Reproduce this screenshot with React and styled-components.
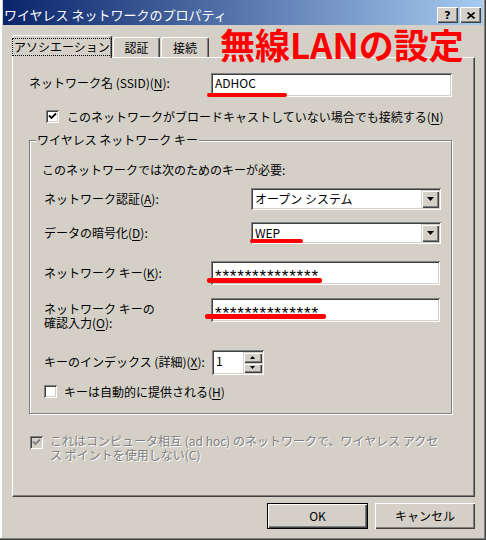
import React from 'react';
import styled, { createGlobalStyle } from 'styled-components';

const GlobalStyle = createGlobalStyle`
  html, body {
    margin: 0;
    padding: 0;
    background: #d4d0c8;
  }
  body {
    font-family: "Noto Sans CJK JP", "Noto Sans", sans-serif;
    font-size: 12px;
    color: #000;
  }
  * {
    box-sizing: border-box;
  }
`;

const raised = `
  box-shadow: inset 1px 1px #fff, inset -1px -1px #404040, inset -2px -2px #808080;
`;
const sunken = `
  box-shadow: inset 1px 1px #808080, inset -1px -1px #fff, inset 2px 2px #404040, inset -2px -2px #d4d0c8;
`;

const Window = styled.div`
  width: 486px;
  height: 540px;
  background: #d4d0c8;
  padding: 0 3px 3px 3px;
  display: flex;
  flex-direction: column;
  box-shadow: inset -1px -1px #404040, inset -2px -2px #808080, inset 2px 0 #fff;
`;

const TitleBar = styled.div`
  height: 25px;
  display: flex;
  align-items: flex-end;
  padding: 0 2px 2px 1px;
  background: linear-gradient(to right, #0a246a, #a6caf0);
`;

const TitleText = styled.div`
  color: #fff;
  font-size: 13px;
  line-height: 16px;
  white-space: nowrap;
`;

const TitleButtons = styled.div`
  margin-left: auto;
  display: flex;
  gap: 2px;
`;

const CaptionButton = styled.div`
  width: 21px;
  height: 16px;
  background: #d4d0c8;
  ${raised}
  display: flex;
  align-items: center;
  justify-content: center;
  font-family: "DejaVu Sans", sans-serif;
  font-weight: bold;
  font-size: 11px;
  line-height: 11px;
`;

const TabStrip = styled.div`
  height: 32px;
  display: flex;
  align-items: flex-end;
  padding-left: 9px;
`;

const Tab = styled.div`
  width: ${(p) => p.$w}px;
  height: ${(p) => (p.$active ? 23 : 20)}px;
  margin-left: ${(p) => (p.$active ? 0 : 1)}px;
  margin-bottom: ${(p) => (p.$active ? -1 : 0)}px;
  position: relative;
  z-index: ${(p) => (p.$active ? 1 : 0)};
  background: #d4d0c8;
  border-top: 1px solid #fff;
  border-left: 1px solid #fff;
  border-right: 1px solid #404040;
  border-radius: 3px 3px 0 0;
  box-shadow: inset -1px 0 #808080;
  display: flex;
  align-items: center;
  justify-content: center;
  white-space: nowrap;
  line-height: 14px;
`;

const FocusText = styled.span`
  outline: 1px dotted #000;
  outline-offset: 1px;
`;

const Heading = styled.div`
  align-self: flex-start;
  height: 32px;
  margin-left: 11px;
  margin-top: 1px;
  position: relative;
  z-index: 2;
  color: #ff0000;
  font-size: 35px;
  font-weight: bold;
  line-height: 35px;
  white-space: nowrap;
`;

const Panel = styled.div`
  width: 463px;
  height: 440px;
  margin-left: 9px;
  background: #d4d0c8;
  border-top: 1px solid #fff;
  border-left: 1px solid #fff;
  border-right: 1px solid #404040;
  border-bottom: 1px solid #404040;
  box-shadow: inset -1px -1px #808080;
  padding: 15px 0 0 16px;
`;

const Row = styled.div`
  display: flex;
  align-items: flex-start;
  margin-top: ${(p) => p.$mt || 0}px;
  padding-left: ${(p) => p.$pl || 0}px;
`;

const Label = styled.div`
  width: ${(p) => p.$w}px;
  flex-shrink: 0;
  margin-top: ${(p) => p.$mt || 0}px;
  line-height: 14px;
  white-space: nowrap;
`;

const Field = styled.div`
  position: relative;
  width: ${(p) => p.$w}px;
  height: ${(p) => p.$h}px;
  background: #fff;
  ${sunken}
  padding: 3px 4px 0 4px;
  line-height: 14px;
  white-space: nowrap;
`;

const Stars = styled.span`
  font-family: "Liberation Sans", sans-serif;
  font-size: 17px;
  letter-spacing: 0.8px;
  position: relative;
  top: 6px;
`;

const Mark = styled.div`
  position: absolute;
  left: ${(p) => p.$l}px;
  top: ${(p) => p.$t}px;
  width: ${(p) => p.$w}px;
  height: ${(p) => p.$h || 4}px;
  background: #ff0000;
  border-radius: 2px;
`;

const Select = styled.div`
  position: relative;
  width: 190px;
  height: 22px;
  background: #fff;
  ${sunken}
  padding: 2px;
  display: flex;
`;

const SelectValue = styled.div`
  flex: 1;
  padding-left: 2px;
  line-height: 18px;
  white-space: nowrap;
`;

const DropButton = styled.div`
  width: 18px;
  height: 18px;
  background: #d4d0c8;
  box-shadow: inset 1px 1px #d4d0c8, inset 2px 2px #fff, inset -1px -1px #404040, inset -2px -2px #808080;
  display: flex;
  align-items: center;
  justify-content: center;
`;

const Check = styled.div`
  width: 13px;
  height: 13px;
  flex-shrink: 0;
  margin-top: ${(p) => p.$mt || 0}px;
  background: ${(p) => (p.$disabled ? '#d4d0c8' : '#fff')};
  ${sunken}
  display: flex;
  align-items: center;
  justify-content: center;
`;

const CheckText = styled.div`
  margin-left: ${(p) => p.$ml || 8}px;
  line-height: 14px;
  white-space: nowrap;
  color: ${(p) => (p.$disabled ? '#808080' : '#000')};
  text-shadow: ${(p) => (p.$disabled ? '1px 1px #fff' : 'none')};
`;

const Group = styled.div`
  position: relative;
  width: 423px;
  margin-top: 16px;
  border: 1px solid #808080;
  box-shadow: inset 1px 1px #fff, 1px 1px #fff;
  padding: 22px 0 14px 12px;
`;

const Legend = styled.div`
  position: absolute;
  top: -8px;
  left: 6px;
  padding: 0 1px;
  background: #d4d0c8;
  line-height: 14px;
  white-space: nowrap;
`;

const Intro = styled.div`
  line-height: 14px;
`;

const Spin = styled.div`
  width: 52px;
  height: 25px;
  background: #fff;
  ${sunken}
  padding: 2px;
  display: flex;
`;

const SpinValue = styled.div`
  flex: 1;
  padding: 2px 0 0 2px;
  line-height: 14px;
`;

const SpinButtons = styled.div`
  width: 19px;
  display: flex;
  flex-direction: column;
`;

const SpinButton = styled.div`
  flex: 1;
  background: #d4d0c8;
  box-shadow: inset 1px 1px #d4d0c8, inset 2px 2px #fff, inset -1px -1px #404040, inset -2px -2px #808080;
  display: flex;
  align-items: center;
  justify-content: center;
`;

const Footer = styled.div`
  margin-top: 6px;
  display: flex;
  justify-content: flex-end;
  gap: 7px;
  padding-right: 8px;
`;

const Button = styled.div`
  width: ${(p) => (p.$default ? 101 : 100)}px;
  height: 26px;
  background: #d4d0c8;
  border: ${(p) => (p.$default ? '1px solid #000' : 'none')};
  ${raised}
  display: flex;
  align-items: center;
  justify-content: center;
  line-height: 14px;
`;

const Underline = styled.span`
  text-decoration: underline;
  text-underline-offset: 2px;
`;

const Arrow = ({ up, small }) => {
  const w = small ? 5 : 7;
  const h = small ? 3 : 4;
  const pts = up ? `0,${h} ${w},${h} ${w / 2},0` : `0,0 ${w},0 ${w / 2},${h}`;
  return (
    <svg width={w} height={h} viewBox={`0 0 ${w} ${h}`}>
      <polygon points={pts} fill="#000" />
    </svg>
  );
};

const Tick = ({ color }) => (
  <svg width="9" height="9" viewBox="0 0 9 9">
    <path d="M1 3.5 L3.5 6 L8 1.5" stroke={color} strokeWidth="1.8" fill="none" />
  </svg>
);

const App = () => {
  return (
    <>
      <GlobalStyle />
      <Window>
        <TitleBar>
          <TitleText>ワイヤレス ネットワークのプロパティ</TitleText>
          <TitleButtons>
            <CaptionButton>?</CaptionButton>
            <CaptionButton>
              <svg width="8" height="7" viewBox="0 0 8 7">
                <path d="M0.5 0.5 L7.5 6.5 M7.5 0.5 L0.5 6.5" stroke="#000" strokeWidth="1.6" />
              </svg>
            </CaptionButton>
          </TitleButtons>
        </TitleBar>

        <TabStrip>
          <Tab $active $w={100}>
            <FocusText>アソシエーション</FocusText>
          </Tab>
          <Tab $w={47}>認証</Tab>
          <Tab $w={48}>接続</Tab>
          <Heading>無線LANの設定</Heading>
        </TabStrip>

        <Panel>
          <Row>
            <Label $w={182} $mt={3}>
              ネットワーク名 (SSID)(<Underline>N</Underline>):
            </Label>
            <Field $w={241} $h={24}>
              ADHOC
              <Mark $l={-4} $t={20} $w={80} />
            </Field>
          </Row>

          <Row $mt={13} $pl={17}>
            <Check>
              <Tick color="#000" />
            </Check>
            <CheckText>
              このネットワークがブロードキャストしていない場合でも接続する(<Underline>N</Underline>)
            </CheckText>
          </Row>

          <Group>
            <Legend>ワイヤレス ネットワーク キー</Legend>
            <Intro>このネットワークでは次のためのキーが必要:</Intro>

            <Row $mt={11} $pl={2}>
              <Label $w={207} $mt={4}>
                ネットワーク認証(<Underline>A</Underline>):
              </Label>
              <Select>
                <SelectValue>オープン システム</SelectValue>
                <DropButton>
                  <Arrow />
                </DropButton>
              </Select>
            </Row>

            <Row $mt={12} $pl={2}>
              <Label $w={207} $mt={4}>
                データの暗号化(<Underline>D</Underline>):
              </Label>
              <Select>
                <SelectValue>WEP</SelectValue>
                <DropButton>
                  <Arrow />
                </DropButton>
                <Mark $l={-1} $t={17} $w={53} />
              </Select>
            </Row>

            <Row $mt={17} $pl={2}>
              <Label $w={167} $mt={5}>
                ネットワーク キー(<Underline>K</Underline>):
              </Label>
              <Field $w={229} $h={24}>
                <Stars>**************</Stars>
                <Mark $l={-4} $t={17} $w={115} $h={5} />
              </Field>
            </Row>

            <Row $mt={13} $pl={2}>
              <Label $w={167} $mt={4}>
                ネットワーク キーの
                <br />
                確認入力(<Underline>O</Underline>):
              </Label>
              <Field $w={229} $h={24}>
                <Stars>**************</Stars>
                <Mark $l={-6} $t={16} $w={121} $h={5} />
              </Field>
            </Row>

            <Row $mt={20} $pl={2}>
              <Label $w={168} $mt={5}>
                キーのインデックス (詳細)(<Underline>X</Underline>):
              </Label>
              <Spin>
                <SpinValue>1</SpinValue>
                <SpinButtons>
                  <SpinButton>
                    <Arrow up small />
                  </SpinButton>
                  <SpinButton>
                    <Arrow small />
                  </SpinButton>
                </SpinButtons>
              </Spin>
            </Row>

            <Row $mt={10} $pl={2}>
              <Check />
              <CheckText $ml={7}>
                キーは自動的に提供される(<Underline>H</Underline>)
              </CheckText>
            </Row>
          </Group>

          <Row $mt={20} $pl={1}>
            <Check $disabled $mt={2}>
              <Tick color="#808080" />
            </Check>
            <CheckText $disabled $ml={7}>
              これはコンピュータ相互 (ad hoc) のネットワークで、ワイヤレス アクセ
              <br />
              ス ポイントを使用しない(C)
            </CheckText>
          </Row>
        </Panel>

        <Footer>
          <Button $default>OK</Button>
          <Button>キャンセル</Button>
        </Footer>
      </Window>
    </>
  );
};

export default App;
